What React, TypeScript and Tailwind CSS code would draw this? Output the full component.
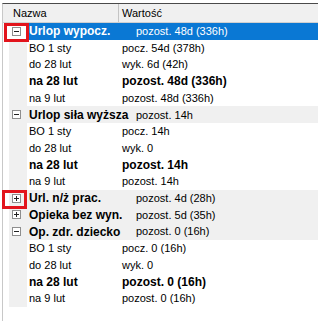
type Row =
  | { kind: "group"; name: string; value: string; open: boolean; selected?: boolean }
  | { kind: "item"; name: string; value: string; bold?: boolean };

const rows: Row[] = [
  { kind: "group", name: "Urlop wypocz.", value: "pozost. 48d (336h)", open: true, selected: true },
  { kind: "item", name: "BO 1 sty", value: "pocz. 54d (378h)" },
  { kind: "item", name: "do 28 lut", value: "wyk. 6d (42h)" },
  { kind: "item", name: "na 28 lut", value: "pozost. 48d (336h)", bold: true },
  { kind: "item", name: "na 9 lut", value: "pozost. 48d (336h)" },
  { kind: "group", name: "Urlop siła wyższa", value: "pozost. 14h", open: true },
  { kind: "item", name: "BO 1 sty", value: "pocz. 14h" },
  { kind: "item", name: "do 28 lut", value: "wyk. 0" },
  { kind: "item", name: "na 28 lut", value: "pozost. 14h", bold: true },
  { kind: "item", name: "na 9 lut", value: "pozost. 14h" },
  { kind: "group", name: "Url. n/ż prac.", value: "pozost. 4d (28h)", open: false },
  { kind: "group", name: "Opieka bez wyn.", value: "pozost. 5d (35h)", open: false },
  { kind: "group", name: "Op. zdr. dziecko", value: "pozost. 0 (16h)", open: true },
  { kind: "item", name: "BO 1 sty", value: "pocz. 0 (16h)" },
  { kind: "item", name: "do 28 lut", value: "wyk. 0" },
  { kind: "item", name: "na 28 lut", value: "pozost. 0 (16h)", bold: true },
  { kind: "item", name: "na 9 lut", value: "pozost. 0 (16h)" },
];

function Expander({ open }: { open: boolean }) {
  return (
    <span className="relative ml-[3px] flex h-[9px] w-[9px] items-center justify-center border border-[#8e8e8e] bg-white">
      <span className="absolute h-px w-[5px] bg-[#222]" />
      {!open && <span className="absolute h-[5px] w-px bg-[#222]" />}
    </span>
  );
}

function TreeRow({ row }: { row: Row }) {
  if (row.kind === "group") {
    const sel = row.selected;
    return (
      <div className="flex h-[16.7px] items-center">
        <div className="h-full w-[6px] bg-white" />
        <div className={`flex h-full w-[18px] items-center ${sel ? "bg-white" : "bg-[#f0f0f0]"}`}>
          <Expander open={row.open} />
        </div>
        <div className={`flex h-full flex-1 items-center ${sel ? "bg-[#0a78d4] text-white" : "bg-[#f0f0f0] text-black"}`}>
          <div className="w-[92px] whitespace-nowrap pl-[2px] text-[12px] font-bold">{row.name}</div>
          <div className="whitespace-nowrap pl-[17px] text-[11px]">{row.value}</div>
        </div>
      </div>
    );
  }
  const weight = row.bold ? "font-bold text-[12px]" : "text-[11px]";
  return (
    <div className="flex h-[16.7px] items-center">
      <div className="h-full w-[6px] bg-white" />
      <div className="h-full w-[18px] bg-[#f0f0f0]" />
      <div className={`w-[92px] whitespace-nowrap pl-[2px] text-black ${weight}`}>{row.name}</div>
      <div className={`whitespace-nowrap pl-[3px] text-black ${weight}`}>{row.value}</div>
    </div>
  );
}

export default function App() {
  return (
    <div className="relative h-[321px] w-[322px] overflow-hidden bg-white font-['Liberation_Sans',Arial,sans-serif]">
      <div className="ml-[2px] mt-[3px] h-[318px] w-[316px] border-l border-t border-l-[#c8c8c8] border-t-[#4a4a4a]">
        {/* header */}
        <div className="flex h-[19px] items-center border-b border-[#d0d0d0] bg-[#f0f0f0] text-[11px] text-black">
          <div className="h-full w-[116px] border-r border-[#c4c4c4] pl-[10px] leading-[19px]">Nazwa</div>
          <div className="pl-[3px]">Wartość</div>
        </div>
        {rows.map((r, i) => (
          <TreeRow key={i} row={r} />
        ))}
      </div>

      {/* red annotation boxes */}
      <div className="absolute left-[4px] top-[23px] h-[19px] w-[25px] border-[3px] border-[#e2141c]" />
      <div className="absolute left-[2px] top-[190px] h-[19px] w-[25px] border-[3px] border-[#e2141c]" />
    </div>
  );
}
